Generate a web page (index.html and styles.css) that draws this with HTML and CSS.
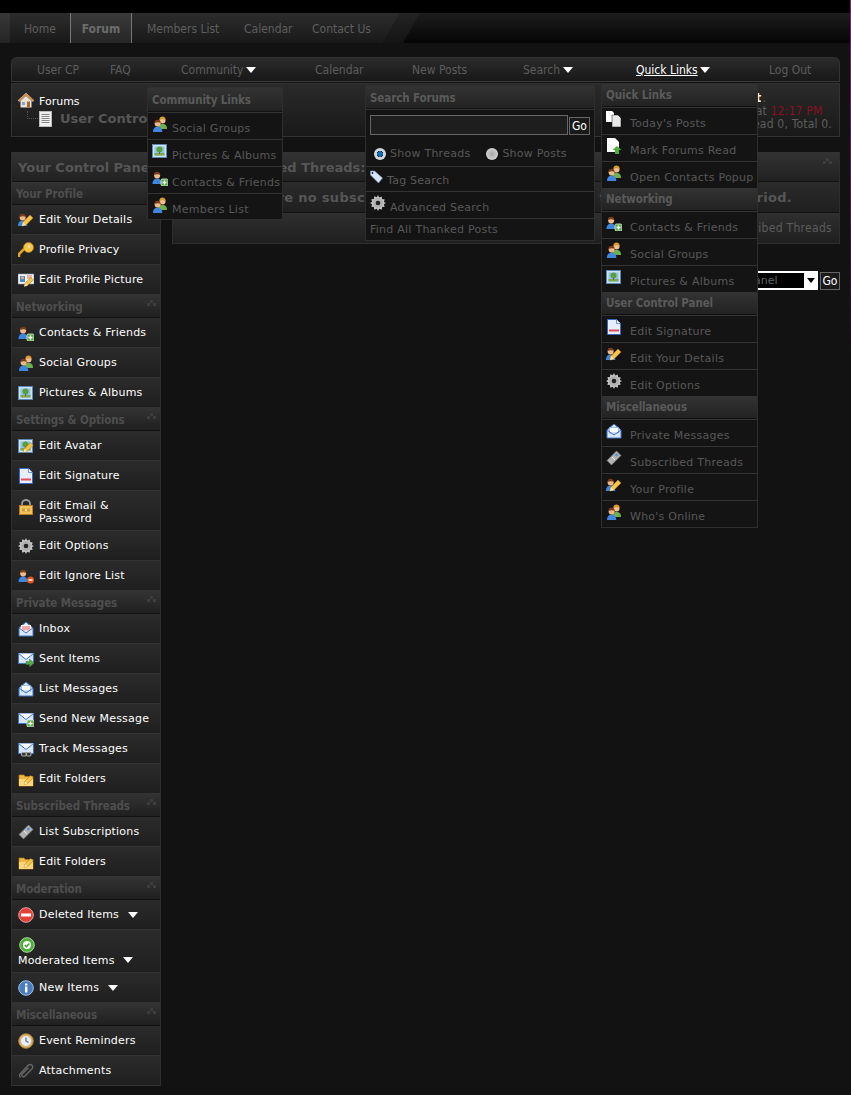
FILE: index.html
```html
<!DOCTYPE html>
<html lang="en">
<head>
<meta charset="utf-8">
<title>User Control Panel</title>
<link rel="stylesheet" href="styles.css">
</head>
<body>
<svg class="defs" width="0" height="0" aria-hidden="true">
  <defs>
    <symbol id="p-blue" viewBox="0 0 16 16"><path d="M1 16c0-4 2-6 5-6s5 2 5 6z" fill="#3f86e0"/><circle cx="6" cy="7" r="3.2" fill="#f0b98c"/><path d="M2.8 6.5C2.6 3.6 4.3 3 6 3s3.4.7 3.2 3.5C8 5.4 5 5.4 2.8 6.5z" fill="#7a3c18"/></symbol>
    <symbol id="p-green" viewBox="0 0 16 16"><path d="M6 13c0-4 2-5 4.500-5s4.500 1 4.500 5z" fill="#6fb04f"/><circle cx="10.500" cy="4.500" r="3" fill="#f0c090"/><path d="M7.500 4c-.2-2.600 1.300-3.500 3-3.500s3.200.9 3 3.500c-1.500-1-4-1-6 0z" fill="#d99a2b"/></symbol>
    <symbol id="pencil" viewBox="0 0 16 16"><path d="M4 14l1-4 7-7 3 3-7 7z" fill="#f3c549" stroke="#b5791c" stroke-width=".7"/><path d="M4 14l1-4 3 3z" fill="#fbe6b4"/></symbol>
    <symbol id="i-profile" viewBox="0 0 16 16"><use href="#p-blue" x="-1" y="-1" width="15" height="15"/><use href="#pencil"/></symbol>
    <symbol id="i-key" viewBox="0 0 16 16"><path d="M1 15v-3l6-6" fill="none" stroke="#e0a526" stroke-width="2.600"/><circle cx="10.500" cy="5.500" r="5" fill="#f3c549" stroke="#b5791c" stroke-width=".8"/><circle cx="11" cy="4.500" r="1.200" fill="#fbe6b4"/></symbol>
    <symbol id="i-card" viewBox="0 0 16 16"><rect x="0" y="2" width="16" height="10" fill="#f1f4f8" stroke="#8a96a5" stroke-width=".6"/><rect x="2" y="4" width="5" height="6" fill="#4b84c9"/><circle cx="4.500" cy="5.800" r="1.500" fill="#e9b184"/><path d="M9 4h5M9 6h5" stroke="#e0744a"/><use href="#pencil" x="3" y="3" width="13" height="13"/></symbol>
    <symbol id="i-add" viewBox="0 0 16 16"><use href="#p-blue" y="-1" x="-.5" width="15" height="15"/><rect x="9" y="9" width="7" height="7" rx="1.500" fill="#5aa84a" stroke="#e7f5df" stroke-width=".8"/><path d="M12.500 10.500v4M10.500 12.500h4" stroke="#fff" stroke-width="1.300"/></symbol>
    <symbol id="i-ignore" viewBox="0 0 16 16"><use href="#p-blue" y="-1" x="-.5" width="15" height="15"/><circle cx="12.500" cy="12" r="3.500" fill="#e2571f"/><path d="M10.500 12h4" stroke="#fff" stroke-width="1.400"/></symbol>
    <symbol id="i-group" viewBox="0 0 16 16"><use href="#p-green"/><use href="#p-blue" x="0" y="1" width="15" height="15"/></symbol>
    <symbol id="i-pic" viewBox="0 0 16 16"><rect x=".5" y="1.500" width="14" height="13" fill="#cfe3f5" stroke="#5b88b5"/><rect x="2.500" y="3.500" width="10" height="9" fill="#8cc4e8"/><rect x="2.500" y="10" width="10" height="2.500" fill="#7da84f"/><circle cx="7.500" cy="6.500" r="3" fill="#5c9e3b"/><rect x="7" y="9" width="1" height="2" fill="#7a5a33"/></symbol>
    <symbol id="i-avatar" viewBox="0 0 16 16"><use href="#i-pic"/><use href="#pencil" x="2" y="2" width="14" height="14"/></symbol>
    <symbol id="i-sig" viewBox="0 0 16 16"><path d="M1.500.5h9l4 4v11h-13z" fill="#e6eefb" stroke="#3668c4"/><path d="M10.500.5v4h4" fill="#fff" stroke="#3668c4" stroke-width=".7"/><rect x="3" y="10.500" width="10" height="2" fill="#e8495a"/></symbol>
    <symbol id="i-lock" viewBox="0 0 16 16"><path d="M4 7V4.500a4 3.500 0 0 1 8 0V7" fill="none" stroke="#9a9a9a" stroke-width="1.800"/><rect x="1.500" y="6.500" width="13" height="9" fill="#f5c35a" stroke="#b87d1c"/><path d="M4 9.500h8v3H4z" fill="#d49a30"/><circle cx="8" cy="11" r="1.200" fill="#fbe9b8"/></symbol>
    <symbol id="i-gear" viewBox="0 0 16 16"><path d="M8 0l1.200 2.400 2.500-.9.4 2.600 2.600.4-.9 2.500L16 8l-2.200 1.200.9 2.500-2.600.4-.4 2.600-2.500-.9L8 16l-1.200-2.200-2.500.9-.4-2.600-2.600-.4.9-2.500L0 8l2.200-1.200-.9-2.500 2.600-.4.4-2.600 2.500.9z" fill="#c4c4c4"/><circle cx="8" cy="8" r="5" fill="#b0b0b0"/><circle cx="8" cy="8" r="2.300" fill="#222"/></symbol>
    <symbol id="i-inbox" viewBox="0 0 16 16"><path d="M1 7l7-6 7 6v8H1z" fill="#d7e6fa" stroke="#3f74c4"/><rect x="3.500" y="4.500" width="9" height="5.500" fill="#f2a8a8" stroke="#fff"/><path d="M1 7l7 5 7-5" fill="none" stroke="#3f74c4"/></symbol>
    <symbol id="i-listmsg" viewBox="0 0 16 16"><path d="M1 7l7-6 7 6v8H1z" fill="#d7e6fa" stroke="#3f74c4"/><rect x="3.500" y="4.500" width="9" height="5.500" fill="#fff" stroke="#7ea6dc" stroke-width=".7"/><path d="M1 7l7 5 7-5" fill="none" stroke="#3f74c4"/></symbol>
    <symbol id="mail" viewBox="0 0 16 16"><rect x=".5" y="2.500" width="15" height="10" fill="#d7e6fa" stroke="#3f74c4"/><path d="M.5 2.500l7.500 6 7.500-6" fill="#fff" stroke="#3f74c4"/></symbol>
    <symbol id="i-sent" viewBox="0 0 16 16"><use href="#mail"/><path d="M8 10.500h3.500V8l4.500 4-4.500 4v-2.500H8z" fill="#5aa84a" stroke="#2f7a2a" stroke-width=".5"/></symbol>
    <symbol id="i-send" viewBox="0 0 16 16"><use href="#mail"/><rect x="9" y="9" width="7" height="7" rx="1.500" fill="#5aa84a" stroke="#e7f5df" stroke-width=".8"/><path d="M12.500 10.500v4M10.500 12.500h4" stroke="#fff" stroke-width="1.300"/></symbol>
    <symbol id="i-track" viewBox="0 0 16 16"><use href="#mail"/><path d="M4 11h9v4H4z" fill="#333"/><rect x="3.500" y="11.500" width="5" height="3.500" rx="1.500" fill="none" stroke="#aaa" stroke-width="1.100"/><rect x="8" y="11.500" width="5" height="3.500" rx="1.500" fill="none" stroke="#aaa" stroke-width="1.100"/></symbol>
    <symbol id="i-folder" viewBox="0 0 16 16"><path d="M1 4h5l1 1.500h8V15H1z" fill="#f0b642" stroke="#b87d1c" stroke-width=".7"/><path d="M1 8h14v7H1z" fill="#f9d67b"/><use href="#pencil" x="3" y="2" width="13" height="13"/></symbol>
    <symbol id="i-ticket" viewBox="0 0 16 16"><path d="M1 10.500L10.500 1 15 5.500 5.500 15z" fill="#b3b3b3" stroke="#777" stroke-width=".6"/><path d="M6 7l3 3" stroke="#eee"/><circle cx="10.500" cy="5" r="1.500" fill="#5d8fce"/></symbol>
    <symbol id="i-del" viewBox="0 0 16 16"><circle cx="8" cy="8" r="7.300" fill="#e2413a" stroke="#e9a09c"/><rect x="3" y="6.500" width="10" height="3" fill="#fff"/></symbol>
    <symbol id="i-ok" viewBox="0 0 16 16"><circle cx="8" cy="8" r="7.300" fill="#4fae3c" stroke="#a8dc9c"/><circle cx="8" cy="8" r="4" fill="#fff"/><path d="M5.800 8l1.600 1.700 3-3.300" fill="none" stroke="#3d9a2d" stroke-width="1.500"/></symbol>
    <symbol id="i-info" viewBox="0 0 16 16"><circle cx="8" cy="8" r="7.300" fill="#4a7cc0" stroke="#a5c3ec"/><rect x="7" y="6.500" width="2.400" height="6" fill="#fff"/><rect x="7" y="3.500" width="2.400" height="2" fill="#fff"/></symbol>
    <symbol id="i-clock" viewBox="0 0 16 16"><circle cx="8" cy="8" r="7.300" fill="#d9b26c" stroke="#a77f38"/><circle cx="8" cy="8" r="5" fill="#e8eef7"/><path d="M8 4.500V8l2.500 1.500" fill="none" stroke="#4a6a96" stroke-width="1.100"/></symbol>
    <symbol id="i-clip" viewBox="0 0 16 16"><path d="M2.500 14.500c-1.500-1.500-1-3 0-4l7.500-8c1.500-1.500 3-1 4-.2s1 2.400 0 3.500L7 13c-1 1-2 1-2.800.3s-.6-1.800.2-2.600l6-6" fill="none" stroke="#666" stroke-width="1.400"/></symbol>
    <symbol id="i-home" viewBox="0 0 16 16"><path d="M8 1l8 7.500-1.500 1L8 3.500 1.500 9.500 0 8.500z" fill="#d9862c" stroke="#fff" stroke-width=".4"/><path d="M2.500 9L8 4l5.500 5v6.500h-11z" fill="#e9e4d8"/><rect x="4" y="10" width="3" height="3" fill="#86a5cf"/><rect x="9" y="9.500" width="3" height="6" fill="#a9682c"/></symbol>
    <symbol id="i-doc" viewBox="0 0 14 16"><rect x=".5" y=".5" width="12" height="15" fill="#eeeeee" stroke="#bbb"/><path d="M2.500 3.500h8M2.500 5.500h8M2.500 7.500h8M2.500 9.500h8M2.500 11.500h8" stroke="#888"/></symbol>
    <symbol id="i-today" viewBox="0 0 16 16"><path d="M0 0h6l2 2v9H0z" fill="#fff"/><path d="M6 4h6l3 3v9H6z" fill="#e8e8e8" stroke="#111" stroke-width=".5"/></symbol>
    <symbol id="i-mark" viewBox="0 0 16 16"><path d="M1 0h8l4 4v10H1z" fill="#fff"/><path d="M11 8l4.500 4H13v4h-4v-4H6.500z" fill="#4fae3c"/></symbol>
    <symbol id="i-tag" viewBox="0 0 16 16"><path d="M.5 1h4l8 7-4 5L.5 5z" fill="#d6e4f6" stroke="#6f96c8" stroke-width=".6"/><circle cx="2.500" cy="3" r=".9" fill="#222"/></symbol>
    <symbol id="i-collapse" viewBox="0 0 12 8"><path d="M4 0h4v4H4zM0 4h4v4H0zM8 4h4v4H8z" fill="#3d3d3d"/></symbol>
  </defs>
</svg>

<header class="topbar">
  <nav class="tabs">
    <a class="tab tab-home">Home</a>
    <a class="tab tab-active">Forum</a>
    <a class="tab tab-members">Members List</a>
    <a class="tab tab-calendar">Calendar</a>
    <a class="tab tab-contact">Contact Us</a>
    <span class="slash"></span>
  </nav>
</header>

<div class="page">
  <nav class="navbar">
    <a>User CP</a>
    <a>FAQ</a>
    <a>Community <i class="drop"></i></a>
    <a>Calendar</a>
    <a>New Posts</a>
    <a>Search <i class="drop"></i></a>
    <a><span class="nav-hot">Quick Links</span> <i class="drop"></i></a>
    <a>Log Out</a>
  </nav>

  <section class="crumbs">
    <div class="crumb-left">
      <div class="crumb-top"><svg class="ic"><use href="#i-home"/></svg><span>Forums</span></div>
      <div class="crumb-sub"><span class="tree"></span><svg class="ic-doc"><use href="#i-doc"/></svg><strong>User Control Panel</strong></div>
    </div>
    <div class="crumb-right">
      <div>Welcome back, <b class="who">Stuart</b>.</div>
      <div>You last visited: Today at <span class="time">12:17 PM</span></div>
      <div>Private Messages: Unread 0, Total 0.</div>
    </div>
  </section>

  <div class="columns">
    <aside class="side">
      <h2 class="side-title">Your Control Panel</h2>

      <h3 class="group">Your Profile</h3>
      <a class="item"><svg class="ic"><use href="#i-profile"/></svg>Edit Your Details</a>
      <a class="item"><svg class="ic"><use href="#i-key"/></svg>Profile Privacy</a>
      <a class="item"><svg class="ic"><use href="#i-card"/></svg>Edit Profile Picture</a>

      <h3 class="group">Networking<svg class="collapse"><use href="#i-collapse"/></svg></h3>
      <a class="item"><svg class="ic"><use href="#i-add"/></svg>Contacts &amp; Friends</a>
      <a class="item"><svg class="ic"><use href="#i-group"/></svg>Social Groups</a>
      <a class="item"><svg class="ic"><use href="#i-pic"/></svg>Pictures &amp; Albums</a>

      <h3 class="group">Settings &amp; Options<svg class="collapse"><use href="#i-collapse"/></svg></h3>
      <a class="item"><svg class="ic"><use href="#i-avatar"/></svg>Edit Avatar</a>
      <a class="item"><svg class="ic"><use href="#i-sig"/></svg>Edit Signature</a>
      <a class="item item-tall"><svg class="ic"><use href="#i-lock"/></svg><span>Edit Email &amp;<br>Password</span></a>
      <a class="item"><svg class="ic"><use href="#i-gear"/></svg>Edit Options</a>
      <a class="item"><svg class="ic"><use href="#i-ignore"/></svg>Edit Ignore List</a>

      <h3 class="group">Private Messages<svg class="collapse"><use href="#i-collapse"/></svg></h3>
      <a class="item"><svg class="ic"><use href="#i-inbox"/></svg>Inbox</a>
      <a class="item"><svg class="ic"><use href="#i-sent"/></svg>Sent Items</a>
      <a class="item"><svg class="ic"><use href="#i-listmsg"/></svg>List Messages</a>
      <a class="item"><svg class="ic"><use href="#i-send"/></svg>Send New Message</a>
      <a class="item"><svg class="ic"><use href="#i-track"/></svg>Track Messages</a>
      <a class="item"><svg class="ic"><use href="#i-folder"/></svg>Edit Folders</a>

      <h3 class="group">Subscribed Threads<svg class="collapse"><use href="#i-collapse"/></svg></h3>
      <a class="item"><svg class="ic"><use href="#i-ticket"/></svg>List Subscriptions</a>
      <a class="item"><svg class="ic"><use href="#i-folder"/></svg>Edit Folders</a>

      <h3 class="group">Moderation<svg class="collapse"><use href="#i-collapse"/></svg></h3>
      <a class="item"><svg class="ic"><use href="#i-del"/></svg>Deleted Items<i class="drop drop-side"></i></a>
      <a class="item item-stack"><svg class="ic"><use href="#i-ok"/></svg><span>Moderated Items<i class="drop drop-side"></i></span></a>
      <a class="item"><svg class="ic"><use href="#i-info"/></svg>New Items<i class="drop drop-side"></i></a>

      <h3 class="group">Miscellaneous<svg class="collapse"><use href="#i-collapse"/></svg></h3>
      <a class="item"><svg class="ic"><use href="#i-clock"/></svg>Event Reminders</a>
      <a class="item"><svg class="ic"><use href="#i-clip"/></svg>Attachments</a>
    </aside>

    <main class="main">
      <div class="panel">
        <h2 class="panel-title">Subscribed Threads: 0<svg class="collapse collapse-main"><use href="#i-collapse"/></svg></h2>
        <p class="panel-msg">There are no subscribed threads to view here for the selected time period.</p>
        <div class="panel-foot">List Subscribed Threads</div>
      </div>
      <div class="jump">
        <div class="select"><span class="select-text">User Control Panel</span><i class="select-arrow"></i></div>
        <button class="go" type="button">Go</button>
      </div>
    </main>
  </div>
</div>

<div class="menu menu-community">
  <div class="menu-head">Community Links</div>
  <a class="menu-item"><svg class="ic"><use href="#i-group"/></svg>Social Groups</a>
  <a class="menu-item"><svg class="ic"><use href="#i-pic"/></svg>Pictures &amp; Albums</a>
  <a class="menu-item"><svg class="ic"><use href="#i-add"/></svg>Contacts &amp; Friends</a>
  <a class="menu-item"><svg class="ic"><use href="#i-group"/></svg>Members List</a>
</div>

<div class="menu menu-search">
  <div class="menu-head">Search Forums</div>
  <div class="search-row"><span class="search-input"></span><button class="go go-search" type="button">Go</button></div>
  <div class="radio-row"><span class="radio radio-on"></span><span>Show Threads</span><span class="radio radio-off"></span><span>Show Posts</span></div>
  <a class="menu-item menu-item-tag"><svg class="ic"><use href="#i-tag"/></svg>Tag Search</a>
  <a class="menu-item menu-item-adv"><svg class="ic"><use href="#i-gear"/></svg>Advanced Search</a>
  <a class="menu-item menu-item-find">Find All Thanked Posts</a>
</div>

<div class="menu menu-quick">
  <div class="menu-head">Quick Links</div>
  <a class="menu-item"><svg class="ic"><use href="#i-today"/></svg>Today's Posts</a>
  <a class="menu-item"><svg class="ic"><use href="#i-mark"/></svg>Mark Forums Read</a>
  <a class="menu-item"><svg class="ic"><use href="#i-group"/></svg>Open Contacts Popup</a>
  <div class="menu-head">Networking</div>
  <a class="menu-item"><svg class="ic"><use href="#i-add"/></svg>Contacts &amp; Friends</a>
  <a class="menu-item"><svg class="ic"><use href="#i-group"/></svg>Social Groups</a>
  <a class="menu-item"><svg class="ic"><use href="#i-pic"/></svg>Pictures &amp; Albums</a>
  <div class="menu-head">User Control Panel</div>
  <a class="menu-item"><svg class="ic"><use href="#i-sig"/></svg>Edit Signature</a>
  <a class="menu-item"><svg class="ic"><use href="#i-profile"/></svg>Edit Your Details</a>
  <a class="menu-item"><svg class="ic"><use href="#i-gear"/></svg>Edit Options</a>
  <div class="menu-head">Miscellaneous</div>
  <a class="menu-item"><svg class="ic"><use href="#i-listmsg"/></svg>Private Messages</a>
  <a class="menu-item"><svg class="ic"><use href="#i-ticket"/></svg>Subscribed Threads</a>
  <a class="menu-item"><svg class="ic"><use href="#i-profile"/></svg>Your Profile</a>
  <a class="menu-item"><svg class="ic"><use href="#i-group"/></svg>Who's Online</a>
</div>
</body>
</html>
```

FILE: styles.css
```css
* { box-sizing: border-box; }
html, body { margin: 0; padding: 0; }
body {
  position: relative;
  height: 1095px;
  overflow: hidden;
  background: #121212;
  color: #666;
  font: 11px/14px "DejaVu Sans", Verdana, sans-serif;
}
body::after {
  content: "";
  position: absolute;
  top: 0;
  right: 0;
  width: 1px;
  height: 350px;
  background: linear-gradient(#80207a, #4a184a 60%, #121212);
}
.defs { position: absolute; }

/* top tab strip */
.topbar { padding-top: 13px; background: linear-gradient(#000 13px, #121212 13px); }
.tabs {
  position: relative;
  display: flex;
  height: 30px;
  overflow: hidden;
  background: linear-gradient(#1d1d1d, #050505);
  font: 12px/32px "DejaVu Sans Condensed", "DejaVu Sans", sans-serif;
}
.tabs::before {
  content: "";
  position: absolute;
  top: 0;
  bottom: 0;
  left: 0;
  width: 400px;
  background: linear-gradient(to right, rgba(255, 255, 255, .05) 10px, transparent 10px), linear-gradient(#2c2c2c, #191919);
  clip-path: polygon(0 0, 100% 0, 383px 100%, 0 100%);
}
.tab { position: relative; color: #5e5e5e; }
.tab-home { margin-left: 24px; width: 46px; }
.tab-active {
  width: 62px;
  border-left: 1px solid #777;
  border-right: 1px solid #777;
  background: linear-gradient(#3a3a3a, #262626);
  color: #6c6c6c;
  font-weight: bold;
  text-align: center;
}
.tab-members { margin-left: 15px; width: 97px; }
.tab-calendar { width: 68px; }
.slash { position: absolute; top: 0; bottom: 0; left: 383px; width: 37px; background: linear-gradient(#232323, #141414); clip-path: polygon(17px 0, 37px 0, 20px 100%, 0 100%); }

/* page */
.page { padding: 14px 11px 0; width: 851px; }
.navbar {
  display: grid;
  grid-template-columns: 73px 71px 134px 97px 111px 113px 133px 1fr;
  height: 25px;
  padding-left: 25px;
  border: 1px solid #333;
  border-bottom-color: #3a3a3a;
  border-radius: 6px 6px 0 0;
  background: linear-gradient(#2b2b2b, #181818);
  font: 12px/24px "DejaVu Sans Condensed", "DejaVu Sans", sans-serif;
  color: #5c5c5c;
}
.navbar a { white-space: nowrap; }
.nav-hot { color: #fff; text-decoration: underline; }
.drop {
  display: inline-block;
  width: 0;
  height: 0;
  margin-left: -1px;
  border-left: 5px solid transparent;
  border-right: 5px solid transparent;
  border-top: 6px solid #fff;
  vertical-align: 1px;
}

.crumbs {
  display: flex;
  justify-content: space-between;
  height: 54px;
  margin-top: 1px;
  padding: 6px 7px 0 6px;
  border: 1px solid #333;
  background: linear-gradient(#2a2a2a, #191919);
}
.crumb-left { padding-top: 2px; }
.crumb-top { display: flex; align-items: center; gap: 5px; height: 16px; color: #fff; }
.crumb-top span { padding-top: 4px; }
.crumb-sub { display: flex; align-items: center; height: 18px; margin-top: 2px; color: #565656; font-size: 13px; }
.crumb-sub strong { margin-left: 7px; }
.tree { width: 11px; height: 8px; margin: -8px 1px 0 9px; border-left: 1px dotted #555; border-bottom: 1px dotted #555; }
.ic-doc { width: 14px; height: 16px; }
.crumb-right {
  padding-top: 2px;
  color: #5e5e5e;
  font: 12px/13px "DejaVu Sans Condensed", "DejaVu Sans", sans-serif;
  letter-spacing: .2px;
  white-space: nowrap;
}
.who { color: #fff; letter-spacing: 1.2px; }
.time { color: #8a1020; }

.columns { display: grid; grid-template-columns: 150px 668px; gap: 11px; margin-top: 15px; align-items: start; }

/* sidebar */
.side { display: flex; flex-direction: column; border: 1px solid #2e2e2e; border-top: 0; background: #121212; gap: 1px; }
.side-title {
  height: 29px;
  margin: 0;
  padding-left: 6px;
  background: linear-gradient(#333, #212121);
  color: #565656;
  font-size: 13px;
  line-height: 31px;
  white-space: nowrap;
  overflow: hidden;
}
.group {
  position: relative;
  height: 22px;
  margin: 0;
  padding-left: 4px;
  background: linear-gradient(#333, #202020);
  color: #4e4e4e;
  font: bold 11.5px/24px "DejaVu Sans Condensed", "DejaVu Sans", sans-serif;
  letter-spacing: -.1px;
  white-space: nowrap;
}
.collapse { position: absolute; top: 5px; right: 4px; width: 9px; height: 6px; }
.item {
  display: flex;
  align-items: center;
  gap: 5px;
  height: 29px;
  padding: 0 6px;
  background: linear-gradient(#2b2b2b, #1f1f1f);
  color: #fff;
  white-space: nowrap;
  letter-spacing: .2px;
  box-shadow: 0 1px 0 #333;
}
.ic { flex: none; width: 16px; height: 16px; }
.item-tall { height: 39px; align-items: flex-start; padding-top: 8px; line-height: 13px; }
.item-stack { display: block; height: 42px; padding-top: 7px; }
.item-stack .ic { display: block; margin: 0 1px 1px; }
.drop-side { margin-left: 4px; vertical-align: 0; }
.item-stack .drop-side { margin-left: 8px; vertical-align: 1px; }

/* main */
.panel { border: 1px solid #2e2e2e; border-top: 0; background: #121212; display: flex; flex-direction: column; gap: 1px; }
.panel-title {
  position: relative;
  height: 29px;
  margin: 0;
  padding-left: 42px;
  background: linear-gradient(#333, #212121);
  color: #565656;
  font-size: 13px;
  line-height: 31px;
}
.collapse-main { top: 6px; right: 7px; }
.panel-msg {
  height: 30px;
  margin: 0;
  background: linear-gradient(#2b2b2b, #1f1f1f);
  color: #565656;
  font-size: 13px;
  font-weight: bold;
  letter-spacing: .3px;
  line-height: 31px;
  text-align: center;
  white-space: nowrap;
}
.panel-foot {
  height: 30px;
  padding-right: 7px;
  background: linear-gradient(#2f2f2f, #1f1f1f);
  color: #5c5c5c;
  font: 12px/30px "DejaVu Sans Condensed", "DejaVu Sans", sans-serif;
  letter-spacing: .3px;
  text-align: right;
}
.jump { display: flex; justify-content: flex-end; align-items: center; gap: 2px; margin-top: 27px; }
.select { display: flex; width: 150px; height: 19px; border: 2px solid #fff; border-right: 0; background: #000; color: #666; line-height: 15px; font-size: 11px; }
.select-text { flex: 1; padding-left: 6px; }
.select-arrow { position: relative; width: 14px; background: #fff; }
.select-arrow::after { content: ""; position: absolute; top: 5px; left: 3px; border-left: 4px solid transparent; border-right: 4px solid transparent; border-top: 5px solid #000; }
.go {
  width: 20px;
  height: 18px;
  padding: 0;
  border: 1px solid #666;
  background: #1a1a1a;
  color: #fff;
  font: 12px/14px "DejaVu Sans Condensed", "DejaVu Sans", sans-serif;
}

/* dropdown menus */
.menu { position: absolute; display: flex; flex-direction: column; background: #141414; border: 1px solid #2e2e2e; color: #585858; letter-spacing: .25px; }
.menu-community { top: 87px; left: 147px; width: 136px; }
.menu-search { top: 85px; left: 365px; width: 230px; }
.menu-quick { top: 83px; left: 601px; width: 157px; }
.menu-head {
  flex: none;
  height: 23px;
  padding-left: 4px;
  background: linear-gradient(#333, #222);
  border-bottom: 1px solid #111;
  color: #5a5a5a;
  font: bold 11.5px/23px "DejaVu Sans Condensed", "DejaVu Sans", sans-serif;
  letter-spacing: -.1px;
  white-space: nowrap;
}
.menu-community .menu-head { height: 24px; line-height: 25px; }
.menu-community .menu-item { padding-left: 24px; }
.menu-community .menu-item:last-child { height: 26px; }
.menu-search .menu-head { line-height: 25px; }
.menu-item {
  position: relative;
  flex: none;
  height: 27px;
  padding: 9px 0 0 28px;
  border-top: 1px solid #333;
  line-height: 14px;
  white-space: nowrap;
}
.menu-item .ic { position: absolute; top: 3px; left: 4px; }
.menu-item-tag { height: 25px; padding: 7px 0 0 21px; }
.menu-item-tag .ic { top: 3px; }
.menu-item-adv { padding-left: 24px; }
.menu-item-find { height: 22px; padding: 4px 0 0 4px; }
.search-row { display: flex; gap: 1px; align-items: center; flex: none; height: 30px; padding: 1px 0 0 4px; border-top: 1px solid #333; }
.search-input { width: 198px; height: 20px; border: 1px solid #666; background: #1e1e1e; }
.go-search { margin-top: 1px; width: 21px; }
.radio-row { display: flex; align-items: center; flex: none; height: 27px; padding: 2px 0 0 8px; }
.radio { flex: none; width: 12px; height: 12px; margin-right: 4px; border-radius: 50%; }
.radio-on { background: radial-gradient(circle, #1a6fb0 0 2.500px, #0a2030 3px, #cfd8e0 3.500px); }
.radio-off { margin-left: 16px; background: radial-gradient(circle, #a8a8a8, #e4e4e4); }
```
